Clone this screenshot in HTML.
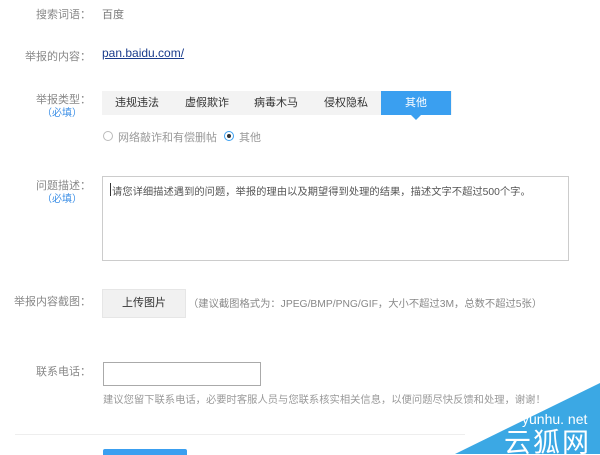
<!DOCTYPE html>
<html><head><meta charset="utf-8"><style>
body{margin:0;width:600px;height:454px;overflow:hidden;background:#fff;font-family:"Liberation Sans","Noto Sans CJK SC",sans-serif;font-size:11px;color:#666;position:relative}
.a{position:absolute;white-space:nowrap}
.l{right:509px;text-align:right;color:#888}
.req{color:#3a8ee6}
.tab{position:absolute;top:91px;height:24px;line-height:24px;width:70px;text-align:center;color:#333;font-size:11px}
</style></head><body>
<div class="a l" style="top:6px">搜索词语：</div>
<div class="a" style="left:102px;top:6px;color:#777">百度</div>
<div class="a l" style="top:48px">举报的内容：</div>
<div class="a" style="left:102px;top:46px;color:#1a3c8c;text-decoration:underline;font-size:12px">pan.baidu.com/</div>
<div class="a l" style="top:91px">举报类型：</div>
<div class="a req" style="right:518px;top:104px;font-size:10px">（必填）</div>
<div class="a" style="left:102px;top:91px;width:350px;height:24px;background:#f3f3f3"></div>
<div class="tab" style="left:102px">违规违法</div>
<div class="tab" style="left:172px">虚假欺诈</div>
<div class="tab" style="left:241px">病毒木马</div>
<div class="tab" style="left:311px">侵权隐私</div>
<div class="tab" style="left:381px;background:#3a9ff0;color:#fff">其他</div>
<div class="a" style="left:411px;top:115px;border:5px solid transparent;border-top:5px solid #3a9ff0;border-bottom:0"></div>
<div class="a" style="left:103px;top:131px;width:8px;height:8px;border:1px solid #bbb;border-radius:50%"></div>
<div class="a" style="left:118px;top:129px;color:#999">网络敲诈和有偿删帖</div>
<div class="a" style="left:224px;top:131px;width:8px;height:8px;border:1px solid #3a9ff0;border-radius:50%"><div style="margin:2px;width:4px;height:4px;background:#333;border-radius:50%"></div></div>
<div class="a" style="left:239px;top:129px;color:#999">其他</div>
<div class="a l" style="top:177px">问题描述：</div>
<div class="a req" style="right:518px;top:190px;font-size:10px">（必填）</div>
<div class="a" style="left:102px;top:176px;width:465px;height:83px;border:1px solid #ccc"></div>
<div class="a" style="left:110px;top:183px;width:1px;height:13px;background:#333"></div>
<div class="a" style="left:112px;top:183px;color:#555;font-size:10.3px">请您详细描述遇到的问题，举报的理由以及期望得到处理的结果，描述文字不超过500个字。</div>
<div class="a l" style="top:293px">举报内容截图：</div>
<div class="a" style="left:102px;top:289px;width:82px;height:27px;line-height:27px;background:#f1f1f1;border:1px solid #e6e6e6;text-align:center;color:#333">上传图片</div>
<div class="a" style="left:188px;top:295px;color:#888;font-size:10.3px">（建议截图格式为：JPEG/BMP/PNG/GIF，大小不超过3M，总数不超过5张）</div>
<div class="a l" style="top:363px">联系电话：</div>
<div class="a" style="left:103px;top:362px;width:156px;height:22px;border:1px solid #aaa"></div>
<div class="a" style="left:103px;top:391px;color:#999;font-size:10.3px">建议您留下联系电话，必要时客服人员与您联系核实相关信息，以便问题尽快反馈和处理，谢谢！</div>
<div class="a" style="left:15px;top:434px;width:450px;height:1px;background:#eee"></div>
<div class="a" style="left:103px;top:449px;width:84px;height:6px;background:#3a9ff0;border-radius:2px 2px 0 0"></div>
<svg class="a" style="left:0;top:0" width="600" height="454"><polygon points="455,454 600,383 600,454" fill="#3ba8e4"/>
<text x="522" y="424" fill="#fff" font-size="14" font-family="Liberation Sans,sans-serif">yunhu. net</text>
<text x="504" y="452" fill="#fff" font-size="27" letter-spacing="2" font-family="Noto Sans CJK SC,sans-serif">云狐网</text></svg>
</body></html>
